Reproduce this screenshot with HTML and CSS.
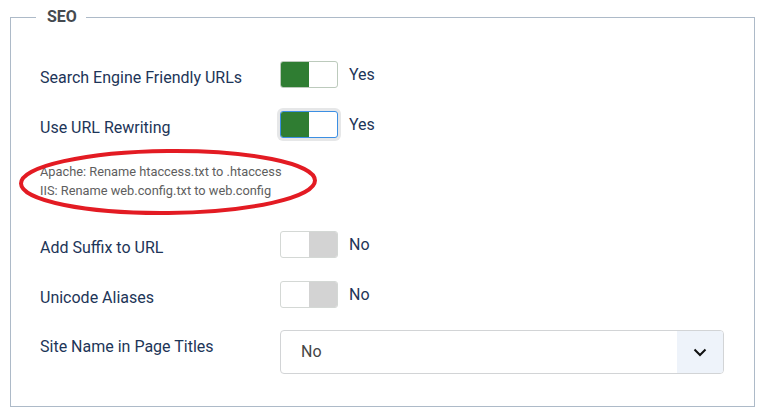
FILE: index.html
```html
<!doctype html>
<html>
<head>
<meta charset="utf-8">
<title>SEO Settings</title>
<link rel="stylesheet" href="styles.css">
</head>
<body>
<fieldset class="options">
  <legend>SEO</legend>
  <div class="fields">
    <div class="row">
      <label class="row-label">Search Engine Friendly URLs</label>
      <div class="row-control">
        <span class="switch on"><span class="half"></span><span class="half"></span></span>
        <span class="state">Yes</span>
      </div>
    </div>
    <div class="row row-tight">
      <label class="row-label">Use URL Rewriting</label>
      <div class="row-control">
        <span class="switch on focused"><span class="half"></span><span class="half"></span></span>
        <span class="state">Yes</span>
      </div>
    </div>
    <div class="note">
      <div>Apache: Rename htaccess.txt to .htaccess</div>
      <div>IIS: Rename web.config.txt to web.config</div>
      <svg class="mark" width="304" height="72" viewBox="0 0 304 72">
        <ellipse cx="151" cy="35" rx="147" ry="31" fill="none" stroke="#e31b23" stroke-width="4" transform="rotate(-0.6 151 35)"/>
      </svg>
    </div>
    <div class="row">
      <label class="row-label">Add Suffix to URL</label>
      <div class="row-control">
        <span class="switch off"><span class="half"></span><span class="half"></span></span>
        <span class="state">No</span>
      </div>
    </div>
    <div class="row row-last">
      <label class="row-label">Unicode Aliases</label>
      <div class="row-control">
        <span class="switch off"><span class="half"></span><span class="half"></span></span>
        <span class="state">No</span>
      </div>
    </div>
    <div class="row row-select">
      <label class="row-label">Site Name in Page Titles</label>
      <div class="row-control">
        <div class="select">
          <span class="select-value">No</span>
          <span class="select-caret">
            <svg width="14" height="9" viewBox="0 0 14 9"><path d="M1.5 1.5 L7 7 L12.5 1.5" fill="none" stroke="#111" stroke-width="2"/></svg>
          </span>
        </div>
      </div>
    </div>
  </div>
</fieldset>
</body>
</html>
```

FILE: styles.css
```css
body {
  margin: 0;
  background: #fff;
  font-family: Roboto, "Liberation Sans", sans-serif;
}
.options {
  margin: 5px 12px 6px 10px;
  padding: 32px 0 32px 0;
  border: 1px solid #adbac8;
  min-width: 0;
}
.options legend {
  margin-left: 25px;
  padding: 0 9px 0 11px;
  font-size: 16px;
  line-height: 24px;
  font-weight: bold;
  color: #454a50;
}
.fields {
  display: flex;
  flex-direction: column;
  padding: 0 30px 0 29px;
}
.row {
  display: flex;
  align-items: flex-start;
  margin-bottom: 23px;
}
.row-tight {
  margin-bottom: 24px;
}
.row-last {
  margin-bottom: 22px;
}
.row-select {
  margin-bottom: 0;
}
.row-label {
  width: 240px;
  flex: none;
  padding-top: 6px;
  font-size: 16px;
  line-height: 21px;
  color: #1d3558;
}
.row-control {
  flex: 1;
  display: flex;
  align-items: center;
  gap: 11px;
}
.switch {
  display: flex;
  width: 58px;
  height: 27px;
  box-sizing: border-box;
  border: 1px solid #d4d8d5;
  border-radius: 3px;
  overflow: hidden;
  background: #fff;
}
.switch .half {
  width: 50%;
}
.switch.on {
  border-color: #bccabc;
}
.switch.on .half:first-child {
  background: #2f7d32;
}
.switch.off .half:last-child {
  background: #d3d3d3;
}
.switch.focused {
  border-color: #3c8fe3;
  box-shadow: 0 0 0 3px #e6e7e8;
}
.state {
  font-size: 16px;
  color: #1d3558;
  line-height: 21px;
}
.note {
  position: relative;
  margin-bottom: 31px;
  font-size: 12.8px;
  line-height: 19px;
  color: #5e5e5e;
}
.mark {
  position: absolute;
  left: -23px;
  top: -15px;
}
.select {
  display: flex;
  width: 100%;
  height: 44px;
  box-sizing: border-box;
  border: 1px solid #d2d4d6;
  border-radius: 4px;
  overflow: hidden;
}
.select-value {
  flex: 1;
  padding-left: 20px;
  font-size: 16px;
  line-height: 42px;
  color: #454545;
}
.select-caret {
  width: 46px;
  display: flex;
  align-items: center;
  justify-content: center;
  background: #eef3fa;
}
```
